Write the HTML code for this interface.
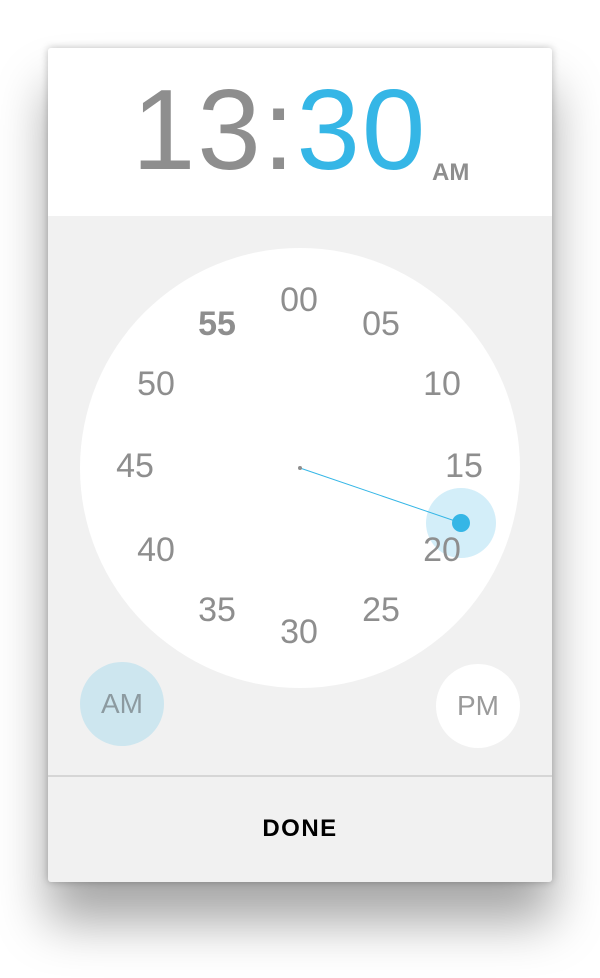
<!DOCTYPE html>
<html><head><style>
html,body{margin:0;padding:0;background:#fff;width:600px;height:978px;overflow:hidden}
body{font-family:"Liberation Sans",sans-serif;position:relative}
.card{position:absolute;left:48px;top:48px;width:504px;height:834px;background:#f1f1f1;border-radius:3px;
box-shadow:0 0 8px rgba(0,0,0,.25),0 40px 50px rgba(0,0,0,.35);overflow:hidden}
.head{position:absolute;left:0;top:0;width:504px;height:168px;background:#fff}
.t{position:absolute;top:13px;font-size:114px;line-height:140px;color:#8e8e8e;white-space:nowrap;letter-spacing:2px}
.n{position:absolute;font-size:34px;color:#8e8e8e;width:80px;text-align:center;line-height:40px}
.divider{position:absolute;left:0;top:727px;width:504px;height:2px;background:#d6d6d6}
</style></head><body>
<div class="card">
  <div class="head">
    <div class="t" style="left:84px">13:<span style="color:#35b6e6">30</span></div>
    <div style="position:absolute;left:384px;top:111px;font-size:24px;font-weight:bold;color:#8e8e8e">AM</div>
  </div>
  <div style="position:absolute;left:32px;top:200px;width:440px;height:440px;border-radius:50%;background:#fff"></div>
  <svg style="position:absolute;left:0;top:0" width="504" height="834">
    <circle cx="413" cy="475" r="35" fill="#d3eef9"/>
    <line x1="252" y1="420" x2="413" y2="475" stroke="#35b6e6" stroke-width="1"/>
    <circle cx="413" cy="475" r="9" fill="#35b6e6"/>
    <circle cx="252" cy="420" r="2" fill="#8e8e8e"/>
  </svg>
  <div class="n" style="left:211px;top:232px">00</div>
  <div class="n" style="left:293px;top:256px">05</div>
  <div class="n" style="left:354px;top:316px">10</div>
  <div class="n" style="left:376px;top:398px">15</div>
  <div class="n" style="left:354px;top:482px">20</div>
  <div class="n" style="left:293px;top:542px">25</div>
  <div class="n" style="left:211px;top:564px">30</div>
  <div class="n" style="left:129px;top:542px">35</div>
  <div class="n" style="left:68px;top:482px">40</div>
  <div class="n" style="left:47px;top:398px">45</div>
  <div class="n" style="left:68px;top:316px">50</div>
  <div class="n" style="left:129px;top:256px;font-weight:bold">55</div>
  <div style="position:absolute;left:32px;top:614px;width:84px;height:84px;border-radius:50%;background:#cde6ef;color:#8c9aa0;font-size:28px;line-height:84px;text-align:center">AM</div>
  <div style="position:absolute;left:388px;top:616px;width:84px;height:84px;border-radius:50%;background:#fff;color:#9a9a9a;font-size:28px;line-height:84px;text-align:center">PM</div>
  <div class="divider"></div>
  <div style="position:absolute;left:0;top:766px;width:504px;text-align:center;font-size:24px;font-weight:bold;letter-spacing:1.5px;color:#000;line-height:30px">DONE</div>
</div>
</body></html>
